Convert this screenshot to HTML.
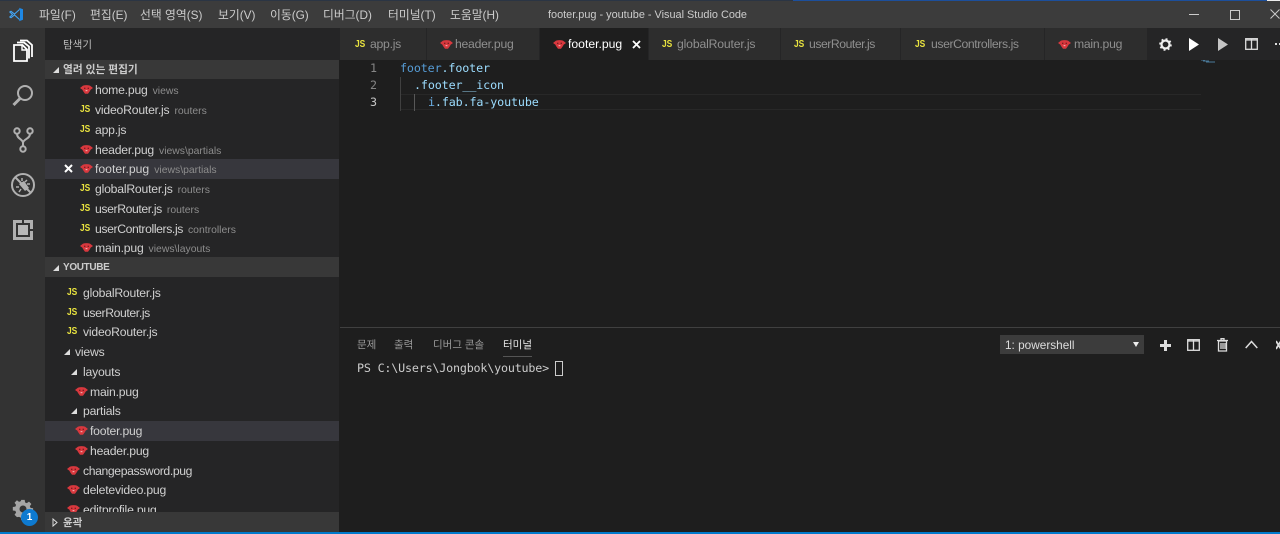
<!DOCTYPE html>
<html lang="ko"><head><meta charset="utf-8"><title>footer.pug - youtube - Visual Studio Code</title>
<style>
html,body{margin:0;padding:0;width:1280px;height:534px;overflow:hidden;background:#1e1e1e}
body{position:relative;font-family:"Liberation Sans","Noto Sans CJK KR",sans-serif;font-size:12.5px;color:#ccc}
.a{position:absolute;white-space:nowrap}
.r{position:absolute;display:block}
.m{position:absolute;top:7px;height:16px;line-height:17px;font-size:11.8px;color:#ccc;white-space:nowrap}
.row{position:absolute;left:45px;width:294px;height:20px}
.n{position:absolute;top:0;line-height:20px;color:#d0d0d0;white-space:nowrap;font-size:12.2px;letter-spacing:-.2px}
.n.l4{letter-spacing:-.38px}
.n.l0{letter-spacing:0}
.d{color:#8d8d8d;font-size:10.4px;margin-left:5px;letter-spacing:0}
.js{position:absolute;font:bold 10.5px/10px "Liberation Sans",sans-serif;color:#e9e33f;transform:scaleX(.8);transform-origin:0 0}
.pg{position:absolute;width:13px;height:9px}
.tab{position:absolute;top:28px;height:32px;background:#2d2d2d;border-right:1px solid #252526}
.tt{position:absolute;top:0;line-height:33px;color:#8f8f8f;white-space:nowrap;font-size:12.2px;letter-spacing:-.25px}
.code{position:absolute;font:11.7px/17px "DejaVu Sans Mono","Liberation Mono",monospace;white-space:pre;letter-spacing:-.12px}
.ln{position:absolute;width:30px;text-align:right;left:347px;font:11.7px/17px "DejaVu Sans Mono",monospace;color:#858585}
</style></head><body>
<svg width="0" height="0" style="position:absolute"><defs>
<symbol id="p" viewBox="0 0 13 9"><path d="M3 .6Q6.500-.4 10 .6L13 3 10.700 4.600 9.800 6.200 8 8.700H5L3.200 6.200 2.300 4.600 0 3z" fill="#d8383e"/><path d="M4 2.700h1.400v1H4zM7.600 2.700H9v1H7.600z" fill="#5a1518"/><path d="M5.600 5h1.800v1.200H5.600z" fill="#f0a8a8"/></symbol>
</defs></svg>

<!-- title bar -->
<div class="r" style="left:0;top:0;width:1280px;height:28px;background:#3c3c3c"></div>
<div class="r" style="left:0;top:0;width:1280px;height:1px;background:#2b3544"></div>
<div class="r" style="left:793px;top:0;width:474px;height:1px;background:#1c4f9c"></div>
<div class="r" style="left:1267px;top:0;width:13px;height:1px;background:#eee"></div>
<svg class="r" style="left:9px;top:7px" width="15" height="15" viewBox="0 0 15 15"><path d="M10 .8L14 2.300v10.400L10 14.200 11 11.500V3.500z" fill="#1e88e5"/><path d="M10.500 2.500L5.500 7 2 4.300.8 5 3.500 7.500.8 10l1.200.7L5.500 8l5 4.500" fill="none" stroke="#42a5f5" stroke-width="1.100"/></svg>
<div class="m" style="left:39px">파일(F)</div>
<div class="m" style="left:90px">편집(E)</div>
<div class="m" style="left:140px">선택 영역(S)</div>
<div class="m" style="left:218px">보기(V)</div>
<div class="m" style="left:270px">이동(G)</div>
<div class="m" style="left:323px">디버그(D)</div>
<div class="m" style="left:388px">터미널(T)</div>
<div class="m" style="left:450px">도움말(H)</div>
<div class="m" style="left:548px;font-size:10.9px">footer.pug - youtube - Visual Studio Code</div>
<div class="r" style="left:1189px;top:14px;width:10px;height:1px;background:#ccc"></div>
<div class="r" style="left:1230px;top:10px;width:8px;height:8px;border:1px solid #ccc"></div>
<svg class="r" style="left:1270px;top:9px" width="10" height="10" viewBox="0 0 10 10"><path d="M.5.500l9 9M9.500.500l-9 9" stroke="#ccc" stroke-width="1" fill="none"/></svg>

<!-- activity bar -->
<div class="r" style="left:0;top:28px;width:45px;height:504px;background:#333"></div>
<svg class="r" style="left:12px;top:39px" width="22" height="24" viewBox="0 0 22 24" fill="none" stroke="#fff" stroke-width="1.800"><path d="M8 1.500h7l5 4.500v12"/><path d="M5 3.500h7l5 4v12"/><path d="M2 6h8.500L15 10.500V22H2z" fill="#333"/><path d="M10 6v5h5" stroke-width="1.400"/></svg>
<svg class="r" style="left:11px;top:84px" width="24" height="24" viewBox="0 0 24 24" fill="none" stroke="#b0b0b0"><circle cx="14" cy="9" r="7" stroke-width="2"/><path d="M9 14.500L2.500 21" stroke-width="3"/></svg>
<svg class="r" style="left:12px;top:127px" width="22" height="26" viewBox="0 0 22 26" fill="none" stroke="#b0b0b0" stroke-width="2"><circle cx="5" cy="4" r="2.700"/><circle cx="18" cy="4" r="2.700"/><circle cx="11" cy="22" r="2.700"/><path d="M5 7c0 5 6 5 6 9v3M18 7c0 5-7 5-7 9"/></svg>
<svg class="r" style="left:10px;top:172px" width="26" height="26" viewBox="0 0 26 26" fill="none" stroke="#b0b0b0"><circle cx="13" cy="13" r="11" stroke-width="2"/><path d="M5 5l16 16" stroke-width="2"/><path d="M9 12l6 7 4-3-5-7z" fill="#b0b0b0" stroke="none"/><path d="M12 6v3M17 8l-2 2M20 12h-3M6 15h3M9 20l2-3" stroke-width="1.500"/></svg>
<svg class="r" style="left:12px;top:219px" width="22" height="22" viewBox="0 0 22 22" fill="none"><path d="M1 1h9v3H4v14h14v-6h3v9H1z" fill="#b0b0b0"/><path d="M12 1h9v9h-3V4h-6z" fill="#b0b0b0"/><rect x="6" y="6" width="10" height="10" fill="#b8b8b8"/></svg>
<svg class="r" style="left:12px;top:498px" width="22" height="22" viewBox="0 0 22 22"><path d="M9 1h4l.5 3 2 .8 2.500-1.800 2.800 2.800-1.800 2.500.8 2 3 .5v4l-3 .5-.8 2 1.800 2.500-2.800 2.800-2.500-1.800-2 .8-.5 3H9l-.5-3-2-.8L4 21.100 1.200 18.300 3 15.800l-.8-2-3-.5v-4l3-.5.8-2L1.200 4.300 4 1.500l2.500 1.800 2-.8z" fill="#a5a5a5" transform="translate(1.500 1) scale(.86)"/><circle cx="11" cy="11" r="3.500" fill="#333"/></svg>
<div class="r" style="left:21px;top:509px;width:17px;height:17px;border-radius:50%;background:#0e7ad0;color:#fff;font:bold 10px/17px 'Liberation Sans',sans-serif;text-align:center">1</div>

<!-- sidebar -->
<div class="r" style="left:45px;top:28px;width:294px;height:504px;background:#252526"></div>
<div class="a" style="left:63px;top:37px;font-size:10.5px;line-height:16px;color:#bbb">탐색기</div>
<div class="r" style="left:45px;top:60px;width:294px;height:19px;background:#383838"></div>
<div class="a" style="left:63px;top:62px;font-size:10.7px;line-height:17px;font-weight:bold;color:#ccc">열려 있는 편집기</div>
<svg class="r" style="left:52px;top:66px" width="8" height="8"><path d="M1 7h6V1z" fill="#ddd"/></svg>

<div class="row" style="top:80px"><svg class="pg" style="left:35px;top:5px"><use href="#p"/></svg><div class="n" style="left:50px">home.pug<span class="d">views</span></div></div>
<div class="row" style="top:100px"><div class="js" style="left:35px;top:4px">JS</div><div class="n" style="left:50px">videoRouter.js<span class="d">routers</span></div></div>
<div class="row" style="top:120px"><div class="js" style="left:35px;top:4px">JS</div><div class="n" style="left:50px">app.js</div></div>
<div class="row" style="top:140px"><svg class="pg" style="left:35px;top:5px"><use href="#p"/></svg><div class="n" style="left:50px">header.pug<span class="d">views\partials</span></div></div>
<div class="row" style="top:159px;background:#37373d"><svg class="r" style="left:19px;top:5px" width="9" height="9"><path d="M1 1l7 7M8 1L1 8" stroke="#fff" stroke-width="2"/></svg><svg class="pg" style="left:35px;top:5px"><use href="#p"/></svg><div class="n l0" style="left:50px">footer.pug<span class="d">views\partials</span></div></div>
<div class="row" style="top:179px"><div class="js" style="left:35px;top:4px">JS</div><div class="n" style="left:50px">globalRouter.js<span class="d">routers</span></div></div>
<div class="row" style="top:199px"><div class="js" style="left:35px;top:4px">JS</div><div class="n l4" style="left:50px">userRouter.js<span class="d">routers</span></div></div>
<div class="row" style="top:219px"><div class="js" style="left:35px;top:4px">JS</div><div class="n l4" style="left:50px">userControllers.js<span class="d">controllers</span></div></div>
<div class="row" style="top:238px"><svg class="pg" style="left:35px;top:5px"><use href="#p"/></svg><div class="n" style="left:50px">main.pug<span class="d">views\layouts</span></div></div>

<div class="r" style="left:45px;top:257px;width:294px;height:20px;background:#383838"></div>
<div class="a" style="left:63px;top:259px;font-size:10px;line-height:18px;font-weight:bold;color:#ccc;letter-spacing:-.35px">YOUTUBE</div>
<svg class="r" style="left:52px;top:264px" width="8" height="8"><path d="M1 7h6V1z" fill="#ddd"/></svg>

<div class="row" style="top:283px"><div class="js" style="left:22px;top:4px">JS</div><div class="n" style="left:38px">globalRouter.js</div></div>
<div class="row" style="top:303px"><div class="js" style="left:22px;top:4px">JS</div><div class="n l4" style="left:38px">userRouter.js</div></div>
<div class="row" style="top:322px"><div class="js" style="left:22px;top:4px">JS</div><div class="n" style="left:38px">videoRouter.js</div></div>
<div class="row" style="top:342px"><svg class="r" style="left:18px;top:6px" width="8" height="8"><path d="M1 7h6V1z" fill="#ddd"/></svg><div class="n" style="left:30px">views</div></div>
<div class="row" style="top:362px"><svg class="r" style="left:25px;top:6px" width="8" height="8"><path d="M1 7h6V1z" fill="#ddd"/></svg><div class="n" style="left:38px">layouts</div></div>
<div class="row" style="top:382px"><svg class="pg" style="left:30px;top:5px"><use href="#p"/></svg><div class="n" style="left:45px">main.pug</div></div>
<div class="row" style="top:401px"><svg class="r" style="left:25px;top:6px" width="8" height="8"><path d="M1 7h6V1z" fill="#ddd"/></svg><div class="n" style="left:38px">partials</div></div>
<div class="row" style="top:421px;background:#37373d"><svg class="pg" style="left:30px;top:5px"><use href="#p"/></svg><div class="n" style="left:45px">footer.pug</div></div>
<div class="row" style="top:441px"><svg class="pg" style="left:30px;top:5px"><use href="#p"/></svg><div class="n" style="left:45px">header.pug</div></div>
<div class="row" style="top:461px"><svg class="pg" style="left:22px;top:5px"><use href="#p"/></svg><div class="n l4" style="left:38px">changepassword.pug</div></div>
<div class="row" style="top:480px"><svg class="pg" style="left:22px;top:5px"><use href="#p"/></svg><div class="n" style="left:38px">deletevideo.pug</div></div>
<div class="row" style="top:500px"><svg class="pg" style="left:22px;top:5px"><use href="#p"/></svg><div class="n" style="left:38px">editprofile.pug</div></div>

<div class="r" style="left:45px;top:512px;width:294px;height:20px;background:#383838"></div>
<div class="a" style="left:63px;top:514px;font-size:10.5px;line-height:18px;font-weight:bold;color:#ccc">윤곽</div>
<svg class="r" style="left:52px;top:518px" width="6" height="9"><path d="M1 1l4 3.500L1 8z" fill="none" stroke="#ddd"/></svg>
<div class="r" style="left:0;top:532px;width:1280px;height:2px;background:#007acc"></div>

<!-- tabs -->
<div class="r" style="left:339px;top:28px;width:941px;height:32px;background:#252526"></div>
<div class="tab" style="left:340px;width:86px"><div class="js" style="left:15px;top:11px">JS</div><div class="tt" style="left:30px">app.js</div></div>
<div class="tab" style="left:427px;width:112px"><svg class="pg" style="left:13px;top:12px"><use href="#p"/></svg><div class="tt" style="left:28px">header.pug</div></div>
<div class="tab" style="left:540px;width:108px;background:#1e1e1e"><svg class="pg" style="left:13px;top:12px"><use href="#p"/></svg><div class="tt" style="left:28px;color:#fff;letter-spacing:0">footer.pug</div><svg class="r" style="left:92px;top:12px" width="9" height="9"><path d="M1 1l7 7M8 1L1 8" stroke="#fff" stroke-width="1.800"/></svg></div>
<div class="tab" style="left:649px;width:131px"><div class="js" style="left:13px;top:11px">JS</div><div class="tt" style="left:28px;letter-spacing:-.15px">globalRouter.js</div></div>
<div class="tab" style="left:781px;width:119px"><div class="js" style="left:13px;top:11px">JS</div><div class="tt" style="left:28px;letter-spacing:-.45px">userRouter.js</div></div>
<div class="tab" style="left:901px;width:143px"><div class="js" style="left:14px;top:11px">JS</div><div class="tt" style="left:30px;letter-spacing:-.4px">userControllers.js</div></div>
<div class="tab" style="left:1045px;width:102px"><svg class="pg" style="left:13px;top:12px"><use href="#p"/></svg><div class="tt" style="left:29px">main.pug</div></div>

<svg class="r" style="left:1159px;top:38px" width="13" height="13" viewBox="0 0 13 13"><circle cx="6.500" cy="6.500" r="4" fill="none" stroke="#eee" stroke-width="2.200"/><circle cx="6.500" cy="6.500" r="5.500" fill="none" stroke="#eee" stroke-width="1.600" stroke-dasharray="2 2.300"/></svg>
<svg class="r" style="left:1189px;top:38px" width="11" height="13"><path d="M0 0l10 6.500L0 13z" fill="#fff"/></svg>
<svg class="r" style="left:1218px;top:38px" width="11" height="13"><path d="M0 0l10 6.500L0 13z" fill="#c5c5c5"/></svg>
<svg class="r" style="left:1245px;top:38px" width="13" height="12" fill="none" stroke="#ddd" stroke-width="1.300"><rect x=".7" y=".7" width="11.600" height="10.600"/><path d="M6.500 1v10M1 2h11" /></svg>
<div class="r" style="left:1275px;top:43px;width:2px;height:2px;background:#ddd"></div>
<div class="r" style="left:1279px;top:43px;width:1px;height:2px;background:#ddd"></div>

<!-- editor -->
<div class="r" style="left:340px;top:60px;width:940px;height:268px;background:#1e1e1e"></div>
<div class="ln" style="top:60px;width:30px">1</div>
<div class="ln" style="top:77px;width:30px">2</div>
<div class="ln" style="top:94px;width:30px;color:#c6c6c6">3</div>
<div class="r" style="left:400px;top:94px;width:801px;height:1px;background:#282828"></div>
<div class="r" style="left:400px;top:109px;width:801px;height:1px;background:#282828"></div>
<div class="r" style="left:400px;top:77px;width:1px;height:34px;background:#404040"></div>
<div class="r" style="left:414px;top:94px;width:1px;height:17px;background:#585858"></div>
<div class="code" style="left:400px;top:60px"><span style="color:#569cd6">footer</span><span style="color:#9cdcfe">.footer</span></div>
<div class="code" style="left:414px;top:77px;color:#9cdcfe">.footer__icon</div>
<div class="code" style="left:428px;top:94px"><span style="color:#6cb0e6">i</span><span style="color:#9cdcfe">.fab.fa-youtube</span></div>
<svg class="r" style="left:1201px;top:60px" width="16" height="4"><path d="M0 0h4M2 1h6M5 2h9" stroke="#4a7a9a" stroke-width="1"/></svg>

<!-- panel -->
<div class="r" style="left:340px;top:327px;width:940px;height:1px;background:#404040"></div>
<div class="a" style="left:357px;top:338px;font-size:10.5px;line-height:15px;color:#999">문제</div>
<div class="a" style="left:394px;top:338px;font-size:10.5px;line-height:15px;color:#999">출력</div>
<div class="a" style="left:433px;top:338px;font-size:10.5px;line-height:15px;color:#999">디버그 콘솔</div>
<div class="a" style="left:503px;top:338px;font-size:10.5px;line-height:15px;color:#e7e7e7">터미널</div>
<div class="r" style="left:503px;top:356px;width:29px;height:1px;background:#555"></div>
<div class="code" style="left:357px;top:360px;color:#ccc;letter-spacing:-.18px">PS C:\Users\Jongbok\youtube&gt;</div>
<div class="r" style="left:555px;top:361px;width:6px;height:13px;border:1px solid #ccc"></div>
<div class="r" style="left:1000px;top:335px;width:144px;height:19px;background:#3c3c3c"></div>
<div class="a" style="left:1005px;top:335px;font-size:11.8px;line-height:20px;color:#ddd">1: powershell</div>
<svg class="r" style="left:1133px;top:342px" width="6" height="5"><path d="M0 0h6L3 5z" fill="#eee"/></svg>
<svg class="r" style="left:1160px;top:340px" width="11" height="11"><path d="M4 0h3v4h4v3H7v4H4V7H0V4h4z" fill="#ddd"/></svg>
<svg class="r" style="left:1187px;top:339px" width="13" height="12" fill="none" stroke="#ddd" stroke-width="1.300"><rect x=".7" y=".7" width="11.600" height="10.600"/><path d="M6.500 1v10M1 2h11"/></svg>
<svg class="r" style="left:1217px;top:338px" width="11" height="14" fill="none" stroke="#ddd" stroke-width="1.300"><path d="M2 3h7.500v10H1.500V3M0 2.500h11M4 2.500V.7h3v1.800M4 5v6M6 5v6M8 5v6"/></svg>
<svg class="r" style="left:1245px;top:340px" width="13" height="9" fill="none" stroke="#ddd" stroke-width="1.500"><path d="M.7 8l5.800-6.500L12.300 8"/></svg>
<svg class="r" style="left:1276px;top:340px" width="4" height="10" fill="none" stroke="#ddd" stroke-width="1.800"><path d="M0 1l5 8M5 1L0 9"/></svg>
</body></html>
